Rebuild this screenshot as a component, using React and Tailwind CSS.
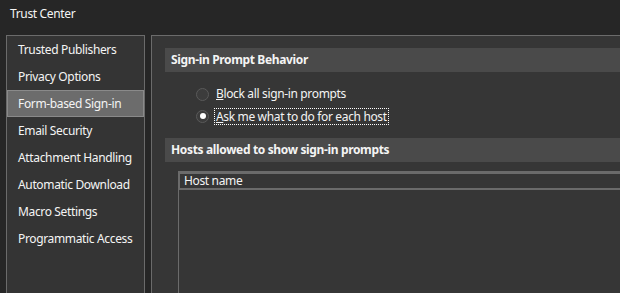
import React from "react";

const items = [
  "Trusted Publishers",
  "Privacy Options",
  "Form-based Sign-in",
  "Email Security",
  "Attachment Handling",
  "Automatic Download",
  "Macro Settings",
  "Programmatic Access",
];

function Radio({ checked }) {
  return (
    <div className="w-[13px] h-[13px] rounded-full border border-[#5a5a5a] bg-[#3c3c3c] flex items-center justify-center shrink-0">
      {checked && <div className="w-[6px] h-[6px] rounded-full bg-white" />}
    </div>
  );
}

export default function App() {
  return (
    <div
      className="w-[620px] h-[293px] bg-[#262626] overflow-hidden flex flex-col text-[#f4f4f4] text-[12px] tracking-[-0.35px]"
      style={{ fontFamily: '"Noto Sans", "Open Sans", sans-serif' }}
    >
      <div className="h-[35px] pl-[10px] pt-[4px] leading-[20px]">Trust Center</div>
      <div className="flex flex-1 min-h-0 pl-[6px] gap-[6px]">
        <div className="w-[139px] shrink-0 border-l border-t border-r border-[#6b6b6b] bg-[#343434] flex flex-col">
          {items.map((t) => {
            const sel = t === "Form-based Sign-in";
            return (
              <div
                key={t}
                className={
                  "h-[27px] flex items-center leading-none whitespace-nowrap " +
                  (sel ? "bg-[#6c6c6c] border border-[#8a8a8a] pl-[10px]" : "pl-[11px]")
                }
              >
                {t}
              </div>
            );
          })}
        </div>
        <div className="flex-1 min-w-0 border-l border-t border-[#6b6b6b] bg-[#363636] pl-[13px] pt-[12px] flex flex-col">
          <div className="h-[24px] bg-[#4a4a4a] flex items-center pl-[6px] font-bold whitespace-nowrap">
            Sign-in Prompt Behavior
          </div>
          <div className="mt-[11px] pl-[31px] flex flex-col">
            <div className="h-[22px] flex items-center">
              <Radio />
              <span className="ml-[7px] whitespace-nowrap">
                <span className="underline">B</span>lock all sign-in prompts
              </span>
            </div>
            <div className="h-[22px] flex items-center">
              <Radio checked />
              <span className="ml-[5px] px-[1px] border border-dotted border-white whitespace-nowrap leading-[15px]">
                <span className="underline">A</span>sk me what to do for each host
              </span>
            </div>
          </div>
          <div className="mt-[11px] h-[24px] bg-[#4a4a4a] flex items-center pl-[6px] font-bold whitespace-nowrap">
            Hosts allowed to show sign-in prompts
          </div>
          <div className="mt-[9px] ml-[13px] flex-1 border-l border-t border-[#6b6b6b] flex flex-col">
            <div className="h-[18px] border-t-2 border-b-2 border-l border-[#6b6b6b] flex items-center pl-[4px] leading-none">
              Host name
            </div>
          </div>
        </div>
      </div>
    </div>
  );
}
